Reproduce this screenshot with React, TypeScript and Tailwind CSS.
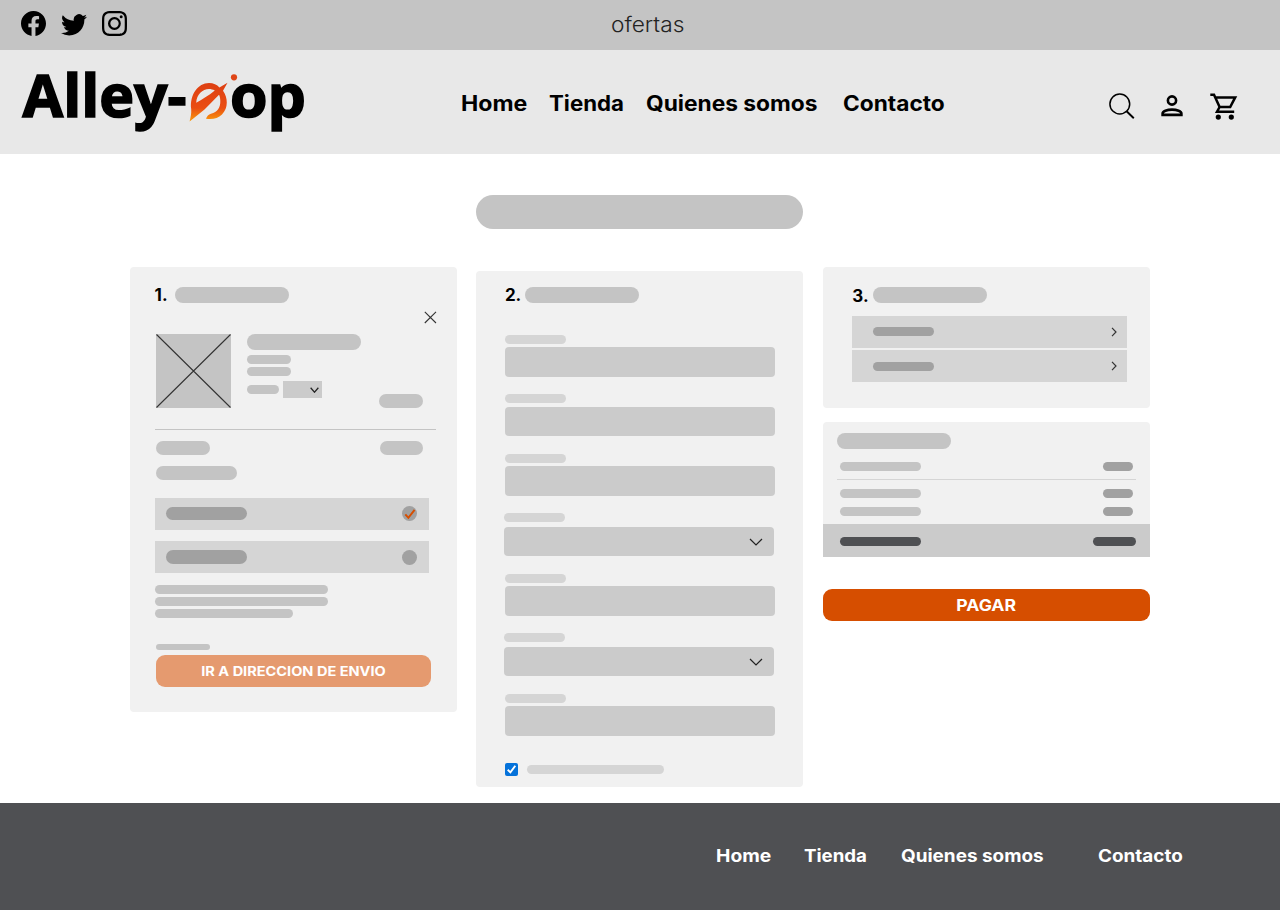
import type { ReactNode } from 'react';
import { BsFacebook, BsTwitter, BsInstagram } from 'react-icons/bs';

function Bar({ className }: { className: string }) {
  return <div className={`shrink-0 rounded-full ${className}`} />;
}

function Chevron({ className }: { className: string }) {
  return (
    <svg viewBox="0 0 14 8" className={className} fill="none" stroke="#222" strokeWidth="1.2" preserveAspectRatio="none">
      <path d="M1 1 L7 7 L13 1" vectorEffect="non-scaling-stroke" />
    </svg>
  );
}

function ChevronRight() {
  return (
    <svg viewBox="0 0 6 10" className="h-[10px] w-[6px] shrink-0" fill="none" stroke="#333" strokeWidth="1.2">
      <path d="M1 0.8 L5 5 L1 9.2" />
    </svg>
  );
}

function StepTitle({ step }: { step: string }) {
  return (
    <div className="flex h-4 items-center">
      <span className="w-[20.5px] shrink-0 pt-px text-[17px] leading-4 font-bold text-black">{step}</span>
      <Bar className="h-4 w-[114px] bg-[#c4c4c4]" />
    </div>
  );
}

function Field({ select = false, className = '' }: { select?: boolean; className?: string }) {
  return (
    <div className={`w-[270px] ${className}`}>
      <Bar className="h-[9px] w-[61px] bg-[#d5d5d5]" />
      <div
        className={`flex h-[29.5px] items-center justify-end rounded-[4px] bg-[#cbcbcb] pr-[10.5px] ${select ? 'mt-[4.5px]' : 'mt-[3.5px]'}`}
      >
        {select && <Chevron className="h-[8px] w-[14px]" />}
      </div>
    </div>
  );
}

function Option({ children, className }: { children?: ReactNode; className: string }) {
  return (
    <div className={`flex h-8 w-[274.5px] items-center bg-[#d5d5d5] pr-3 pl-[11.5px] ${className}`}>
      <Bar className="h-[13.5px] w-[81px] bg-[#a1a1a1]" />
      <div className="ml-auto flex size-[15px] items-center justify-center rounded-full bg-[#a1a1a1]">{children}</div>
    </div>
  );
}

function SummaryRow({ className }: { className: string }) {
  return (
    <div className={`flex justify-between pr-[16.5px] pl-[17px] ${className}`}>
      <Bar className="h-[9px] w-[81px] bg-[#c4c4c4]" />
      <Bar className="h-[9px] w-[30.5px] bg-[#a1a1a1]" />
    </div>
  );
}

function Logo() {
  return (
    <svg width="294" height="104" viewBox="18 50 294 104" className="ml-[18px] shrink-0">
      <defs>
        <linearGradient id="flame" x1="0" y1="0" x2="0" y2="1">
          <stop offset="0" stopColor="#dd3f12" />
          <stop offset="0.65" stopColor="#ea4d12" />
          <stop offset="1" stopColor="#f99c0c" />
        </linearGradient>
      </defs>
      <g fontFamily="'Open Sans', 'Noto Sans', sans-serif" fontWeight="700" fontSize="58.5" fill="#000" stroke="#000" strokeWidth="1.6">
        <text x="22.5" y="117" textLength="164" lengthAdjust="spacingAndGlyphs">Alley-</text>
        <text x="230" y="117" textLength="76" lengthAdjust="spacingAndGlyphs">op</text>
      </g>
      <path
        fill="url(#flame)"
        fillRule="evenodd"
        d="M189.6 121.5 C190.7 117 191.5 113.5 191.2 109 C189.5 95 198 83 209 83 C213.5 83 217 84.5 219.4 87.5 L227.5 82.8 L223 90.8 C228 98 228.5 108 222 114.5 C218 118.4 213 119.6 206 118.8 C207 116 208.5 114.6 211 113.8 C217.5 112 220.5 107.5 220.3 101 C220.2 98.3 219.9 96.5 219 94.8 L204.5 109.5 Z M196.2 102.8 C202 99.5 208.5 95.8 214.8 90.6 C206.5 86 196.8 92 196.2 102.8 Z"
      />
      <circle cx="234" cy="77.3" r="3.1" fill="#df4517" />
    </svg>
  );
}

export default function App() {
  return (
    <div className="flex h-[910px] w-[1280px] flex-col overflow-hidden bg-white font-['Inter','Liberation_Sans',sans-serif]">
      <div className="flex h-[50px] shrink-0 items-start bg-[#c4c4c4] text-black">
        <div className="flex w-[611px] pt-[11px] pl-[21px]">
          <BsFacebook className="size-[25px]" />
          <BsTwitter className="ml-[15px] size-[26px]" />
          <BsInstagram className="ml-[15px] size-[25px]" />
        </div>
        <span className="origin-left scale-x-[1.08] pt-[11px] text-[21px] leading-7 font-light text-[#222]">ofertas</span>
      </div>

      <header className="flex h-[104px] shrink-0 items-start bg-[#e8e8e8] text-black">
        <Logo />
        <nav className="ml-[148.7px] flex w-[648.3px] pt-[38.5px] text-[21px] leading-[30px] font-bold whitespace-nowrap">
          <div className="w-[88px]"><a className="inline-block origin-left scale-x-[1.1]">Home</a></div>
          <div className="w-[97px]"><a className="inline-block origin-left scale-x-[1.06]">Tienda</a></div>
          <div className="w-[197px]"><a className="inline-block origin-left scale-x-[1.083]">Quienes somos</a></div>
          <div><a className="inline-block origin-left scale-x-[1.08]">Contacto</a></div>
        </nav>
        <div className="flex pt-[43px]">
          <svg width="26" height="26" viewBox="0 0 26 26" fill="none" stroke="#000" strokeWidth="1.5">
            <circle cx="10.8" cy="11" r="9.9" />
            <path d="M17.6 18.2 L24.8 25.3" strokeWidth="1.9" />
          </svg>
          <svg width="22" height="26" viewBox="0 0 22 26" fill="none" stroke="#000" strokeWidth="2.6" className="ml-[26px]">
            <circle cx="11" cy="7.5" r="4.1" />
            <path d="M1.6 21.9 V20.4 C1.6 18.2 6 16.6 11 16.6 S20.4 18.2 20.4 20.4 V21.9 Z" />
          </svg>
          <svg width="28" height="28" viewBox="1210 93 28 28" fill="none" stroke="#000" strokeWidth="2.5" className="ml-[27px]">
            <path d="M1210.3 94.8 H1214 L1219.6 107 L1217 111.7 H1234.2 M1215 97.4 H1235.2 L1230.2 107 H1219.6" />
            <g fill="#000" stroke="none">
              <circle cx="1218.3" cy="117.1" r="2.6" />
              <circle cx="1231.3" cy="117.1" r="2.6" />
            </g>
          </svg>
        </div>
      </header>

      <main className="flex h-[649px] shrink-0 flex-col">
        <Bar className="mt-[40.5px] ml-[476.4px] h-[34.8px] w-[327px] bg-[#c4c4c4]" />
        <div className="mt-[37.3px] ml-[130px] flex items-start gap-[19.4px]">
          <section className="h-[445px] w-[327px] rounded-[4px] bg-[#f1f1f1] pt-[20.3px] pl-[24.6px]">
            <StepTitle step="1." />
            <svg width="13" height="13" viewBox="0 0 13 13" className="mt-[7.8px] ml-[269.5px]" fill="none" stroke="#333" strokeWidth="1.1">
              <path d="M0.8 0.8 L12 12 M12 0.8 L0.8 12" />
            </svg>
            <div className="mt-[10px] ml-[1.4px] flex">
              <svg width="75" height="74" viewBox="0 0 75 74" className="bg-[#c4c4c4]" stroke="#333" strokeWidth="1.1">
                <path d="M0.5 0.5 L74.5 73.5 M74.5 0.5 L0.5 73.5" />
              </svg>
              <div className="ml-4 pt-[0.7px]">
                <Bar className="h-4 w-[114px] bg-[#c4c4c4]" />
                <Bar className="mt-[4.5px] h-[9px] w-11 bg-[#c4c4c4]" />
                <Bar className="mt-[3.5px] h-[9px] w-11 bg-[#c4c4c4]" />
                <div className="mt-[5px] flex items-center gap-1">
                  <Bar className="h-[9px] w-8 bg-[#c4c4c4]" />
                  <div className="flex h-[17px] w-[39px] items-center justify-end bg-[#cbcbcb] pr-[2.5px]">
                    <Chevron className="h-[6px] w-[9px]" />
                  </div>
                </div>
              </div>
              <Bar className="mt-[60px] ml-[18.4px] h-[14px] w-[43.5px] bg-[#c4c4c4]" />
            </div>
            <div className="mt-[21px] h-px w-[281px] bg-[#c4c4c4]" />
            <div className="mt-[11.5px] flex justify-between pr-[34px] pl-[1.4px]">
              <Bar className="h-[13.5px] w-[54px] bg-[#c4c4c4]" />
              <Bar className="h-[13.5px] w-[43.5px] bg-[#c4c4c4]" />
            </div>
            <Bar className="mt-[11.5px] ml-[1px] h-[13.5px] w-[81px] bg-[#c4c4c4]" />
            <Option className="mt-[18px]">
              <svg width="12" height="12" viewBox="0 0 11 11" fill="none" stroke="#d64e00" strokeWidth="1.8">
                <path d="M1.2 5.8 L4 9 L9.7 1.8" />
              </svg>
            </Option>
            <Option className="mt-[11.5px]" />
            <Bar className="mt-[11.7px] h-[9px] w-[173.5px] bg-[#c4c4c4]" />
            <Bar className="mt-[3px] h-[9px] w-[173.5px] bg-[#c4c4c4]" />
            <Bar className="mt-[3.5px] h-[9px] w-[138px] bg-[#c4c4c4]" />
            <Bar className="mt-[25.5px] ml-[1.4px] h-[6px] w-[54px] bg-[#c4c4c4]" />
            <button className="mt-[4.8px] ml-[1px] block h-8 w-[275px] rounded-[9px] bg-[#e59a6f] text-[13px] leading-8 font-bold text-white">
              <span className="inline-block scale-x-[1.118]">IR A DIRECCION DE ENVIO</span>
            </button>
          </section>

          <section className="mt-[4.3px] h-[516px] w-[327px] rounded-[4px] bg-[#f1f1f1] pt-4 pl-[28.5px]">
            <StepTitle step="2." />
            <Field className="mt-8" />
            <Field className="mt-[17.5px]" />
            <Field className="mt-[17.5px]" />
            <Field select className="mt-[17.5px] -ml-[1px]" />
            <Field className="mt-[17.5px]" />
            <Field select className="mt-[17.5px] -ml-[1px]" />
            <Field className="mt-[17.5px]" />
            <div className="mt-[27px] flex items-center gap-[9px]">
              <div className="flex size-[13px] items-center justify-center rounded-[2px] bg-[#0572da]">
                <svg width="11" height="11" viewBox="0 0 11 11" fill="none" stroke="#fff" strokeWidth="1.9">
                  <path d="M1.7 5.8 L4.4 8.4 L9.3 1.8" />
                </svg>
              </div>
              <Bar className="h-[9px] w-[137px] bg-[#d5d5d5]" />
            </div>
          </section>

          <div className="w-[327px]">
            <section className="h-[141px] rounded-[4px] bg-[#f1f1f1] pt-[20.5px] pl-[29.5px]">
              <StepTitle step="3." />
              <div className="mt-[12.5px] flex w-[274.5px] flex-col gap-[2.5px]">
                {[0, 1].map((row) => (
                  <div key={row} className="flex h-8 items-center justify-between bg-[#d5d5d5] pr-[10px] pl-[20.3px]">
                    <Bar className="h-[9px] w-[61.5px] bg-[#a1a1a1]" />
                    <ChevronRight />
                  </div>
                ))}
              </div>
            </section>
            <section className="mt-[14.5px] h-[135px] overflow-hidden rounded-t-[4px] bg-[#f1f1f1] pt-[11.3px]">
              <Bar className="ml-[14px] h-4 w-[114px] bg-[#c4c4c4]" />
              <SummaryRow className="mt-[12.5px]" />
              <div className="mx-[14px] mt-2 h-[1.5px] bg-[#d5d5d5]" />
              <SummaryRow className="mt-[9px]" />
              <SummaryRow className="mt-[8.5px]" />
              <div className="mt-[8.2px] flex h-[33px] items-center justify-between bg-[#cbcbcb] pt-[2px] pr-[14px] pl-[17px]">
                <Bar className="h-[9px] w-[81px] bg-[#4f5053]" />
                <Bar className="h-[9px] w-[43px] bg-[#4f5053]" />
              </div>
            </section>
            <button className="mt-8 block h-8 w-full rounded-[9px] bg-[#d64e00] text-base leading-8 font-bold text-white">
              <span className="inline-block scale-x-[1.1]">PAGAR</span>
            </button>
          </div>
        </div>
      </main>

      <footer className="h-[107px] shrink-0 bg-[#4f5053]">
        <nav className="flex pt-[38px] pl-[715.6px] text-[17.5px] leading-[30px] font-bold whitespace-nowrap text-white">
          <div className="w-[88px]"><a className="inline-block origin-left scale-x-[1.1]">Home</a></div>
          <div className="w-[97px]"><a className="inline-block origin-left scale-x-[1.068]">Tienda</a></div>
          <div className="w-[197px]"><a className="inline-block origin-left scale-x-[1.081]">Quienes somos</a></div>
          <div><a className="inline-block origin-left scale-x-[1.08]">Contacto</a></div>
        </nav>
      </footer>
    </div>
  );
}
